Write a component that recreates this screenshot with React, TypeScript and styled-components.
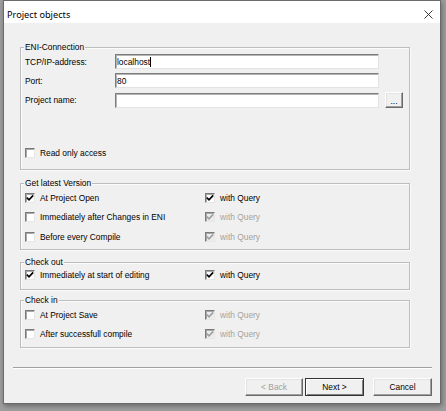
import React from "react";
import styled, { createGlobalStyle, css } from "styled-components";

const Global = createGlobalStyle`
  html, body { margin: 0; padding: 0; }
  body { background: #9e9e9e; width: 446px; height: 411px; overflow: hidden; }
`;

const Desktop = styled.div`
  width: 446px;
  height: 411px;
  box-sizing: border-box;
  padding-left: 3px;
  background: #9e9e9e;
`;

const Window = styled.div`
  width: 438px;
  height: 404px;
  box-sizing: border-box;
  border: 1px solid #6a6a6a;
  background: #f0f0f0;
  display: flex;
  flex-direction: column;
  box-shadow: 1px 2px 5px rgba(0, 0, 0, 0.35);
  font-family: "Liberation Sans", Arial, sans-serif;
  font-size: 8.4px;
  color: #000;
`;

const TitleBar = styled.div`
  height: 22px;
  box-sizing: border-box;
  padding: 4px 7px 0 3px;
  background: #fff;
  display: flex;
  align-items: center;
  justify-content: space-between;
`;

const Title = styled.span`
  font-family: "Noto Sans", "Liberation Sans", sans-serif;
  font-size: 9.2px;
  color: #000;
`;

const CloseGlyph = styled.svg`
  width: 9px;
  height: 9px;
  display: block;
`;

const Body = styled.div`
  flex: 1;
  display: flex;
  flex-direction: column;
  padding: 0 8px 0 9px;
`;

const Groups = styled.div`
  display: flex;
  flex-direction: column;
  margin: 0 22px 0 7px;
`;

const GroupBox = styled.div<{ $gap: number; $height: number; $padTop: number }>`
  position: relative;
  margin-top: ${(p) => p.$gap}px;
  height: ${(p) => p.$height}px;
  box-sizing: border-box;
  border: 1px solid #bdbdbd;
  box-shadow: inset 1px 1px 0 #fbfbfb, 1px 1px 0 #fbfbfb;
  padding: ${(p) => p.$padTop}px 5px 0 4px;
  display: flex;
  flex-direction: column;
`;

const Caption = styled.span`
  position: absolute;
  top: -6px;
  left: 3px;
  padding: 0 1px;
  line-height: 11px;
  background: #f0f0f0;
`;

const FieldGrid = styled.div`
  display: grid;
  grid-template-columns: 90px 264px 24px;
  grid-template-rows: 15px 15px 16px;
  row-gap: 4px;
  align-items: center;
`;

const FieldLabel = styled.span`
  grid-column: 1;
`;

const TextBox = styled.div`
  grid-column: 2;
  height: 15px;
  box-sizing: border-box;
  background: #fff;
  border-style: solid;
  border-width: 1px;
  border-color: #7c7c7c #e3e3e3 #e3e3e3 #7c7c7c;
  box-shadow: inset 1px 1px 0 #b4b4b4;
  padding-left: 1px;
  display: flex;
  align-items: center;
  white-space: pre;
`;

const Caret = styled.span`
  width: 1px;
  height: 10px;
  background: #000;
`;

const RaisedButton = css`
  box-sizing: border-box;
  background: #f0f0f0;
  border-style: solid;
  border-width: 1px;
  border-color: #fff #696969 #696969 #fff;
  box-shadow: inset -1px -1px 0 #a0a0a0, inset 1px 1px 0 #e3e3e3;
  font-family: inherit;
  font-size: 8.4px;
  color: #000;
  padding: 0;
  display: flex;
  align-items: center;
  justify-content: center;
`;

const BrowseButton = styled.button`
  ${RaisedButton};
  grid-column: 3;
  justify-self: end;
  width: 18px;
  height: 16px;
  align-items: flex-end;
  padding-bottom: 3px;
  line-height: 6px;
`;

const BottomRow = styled.div`
  margin-top: auto;
  padding-bottom: 9px;
`;

const CheckRow = styled.div<{ $height?: number }>`
  display: grid;
  grid-template-columns: 180px 1fr;
  height: ${(p) => p.$height ?? 19.5}px;
  align-items: center;
`;

const CheckItem = styled.label<{ $disabled?: boolean }>`
  display: flex;
  align-items: center;
  gap: 5px;
  color: ${(p) => (p.$disabled ? "#a3a3a3" : "#000")};
  white-space: nowrap;
`;

const Box = styled.span<{ $disabled?: boolean }>`
  width: 10px;
  height: 10px;
  box-sizing: border-box;
  flex: none;
  border-style: solid;
  border-width: 1px;
  border-color: #7a7a7a #e6e6e6 #e6e6e6 #7a7a7a;
  box-shadow: inset 1px 1px 0 #a8a8a8;
  background: ${(p) => (p.$disabled ? "#ececec" : "#fff")};
  display: flex;
  align-items: center;
  justify-content: center;
`;

const Tick = styled.svg`
  width: 8px;
  height: 8px;
  display: block;
`;

const Separator = styled.div`
  margin-top: 19px;
  height: 2px;
  box-sizing: border-box;
  border-top: 1px solid #a0a0a0;
  border-bottom: 1px solid #fff;
`;

const ButtonRow = styled.div`
  margin-top: 9px;
  display: flex;
  justify-content: flex-end;
`;

const DialogButton = styled.button<{ $width: number; $gap?: number; $default?: boolean; $disabled?: boolean }>`
  ${RaisedButton};
  width: ${(p) => p.$width}px;
  height: 18px;
  margin-left: ${(p) => p.$gap ?? 0}px;
  color: ${(p) => (p.$disabled ? "#a0a0a0" : "#000")};
  ${(p) =>
    p.$default &&
    css`
      border-color: #333;
      box-shadow: inset 1px 1px 0 #fff, inset -1px -1px 0 #808080;
    `}
`;

const Check = ({ label, checked, disabled }: { label: string; checked?: boolean; disabled?: boolean }) => (
  <CheckItem $disabled={disabled}>
    <Box $disabled={disabled}>
      {checked && (
        <Tick viewBox="0 0 8 8">
          <path
            d="M0.8 3.6 L3 5.8 L7.2 1.4"
            fill="none"
            stroke={disabled ? "#a0a0a0" : "#000"}
            strokeWidth="1.7"
          />
        </Tick>
      )}
    </Box>
    {label}
  </CheckItem>
);

export default function App() {
  return (
    <>
      <Global />
      <Desktop>
        <Window>
          <TitleBar>
            <Title>Project objects</Title>
            <CloseGlyph viewBox="0 0 9 9">
              <path d="M0.5 0.5 L8.5 8.5 M8.5 0.5 L0.5 8.5" stroke="#222" strokeWidth="0.9" />
            </CloseGlyph>
          </TitleBar>
          <Body>
            <Groups>
              <GroupBox $gap={24} $height={123} $padTop={6}>
                <Caption>ENI-Connection</Caption>
                <FieldGrid>
                  <FieldLabel>TCP/IP-address:</FieldLabel>
                  <TextBox>
                    localhost
                    <Caret />
                  </TextBox>
                  <FieldLabel>Port:</FieldLabel>
                  <TextBox>80</TextBox>
                  <FieldLabel>Project name:</FieldLabel>
                  <TextBox />
                  <BrowseButton>...</BrowseButton>
                </FieldGrid>
                <BottomRow>
                  <CheckRow $height={14}>
                    <Check label="Read only access" />
                  </CheckRow>
                </BottomRow>
              </GroupBox>

              <GroupBox $gap={13} $height={67} $padTop={4}>
                <Caption>Get latest Version</Caption>
                <CheckRow>
                  <Check label="At Project Open" checked />
                  <Check label="with Query" checked />
                </CheckRow>
                <CheckRow>
                  <Check label="Immediately after Changes in ENI" />
                  <Check label="with Query" checked disabled />
                </CheckRow>
                <CheckRow>
                  <Check label="Before every Compile" />
                  <Check label="with Query" checked disabled />
                </CheckRow>
              </GroupBox>

              <GroupBox $gap={12} $height={28} $padTop={2}>
                <Caption>Check out</Caption>
                <CheckRow>
                  <Check label="Immediately at start of editing" checked />
                  <Check label="with Query" checked />
                </CheckRow>
              </GroupBox>

              <GroupBox $gap={10} $height={48} $padTop={4}>
                <Caption>Check in</Caption>
                <CheckRow>
                  <Check label="At Project Save" />
                  <Check label="with Query" checked disabled />
                </CheckRow>
                <CheckRow>
                  <Check label="After successfull compile" />
                  <Check label="with Query" checked disabled />
                </CheckRow>
              </GroupBox>
            </Groups>

            <Separator />

            <ButtonRow>
              <DialogButton $width={58} $disabled>
                &lt; Back
              </DialogButton>
              <DialogButton $width={59} $gap={2} $default>
                Next &gt;
              </DialogButton>
              <DialogButton $width={59} $gap={9}>
                Cancel
              </DialogButton>
            </ButtonRow>
          </Body>
        </Window>
      </Desktop>
    </>
  );
}
